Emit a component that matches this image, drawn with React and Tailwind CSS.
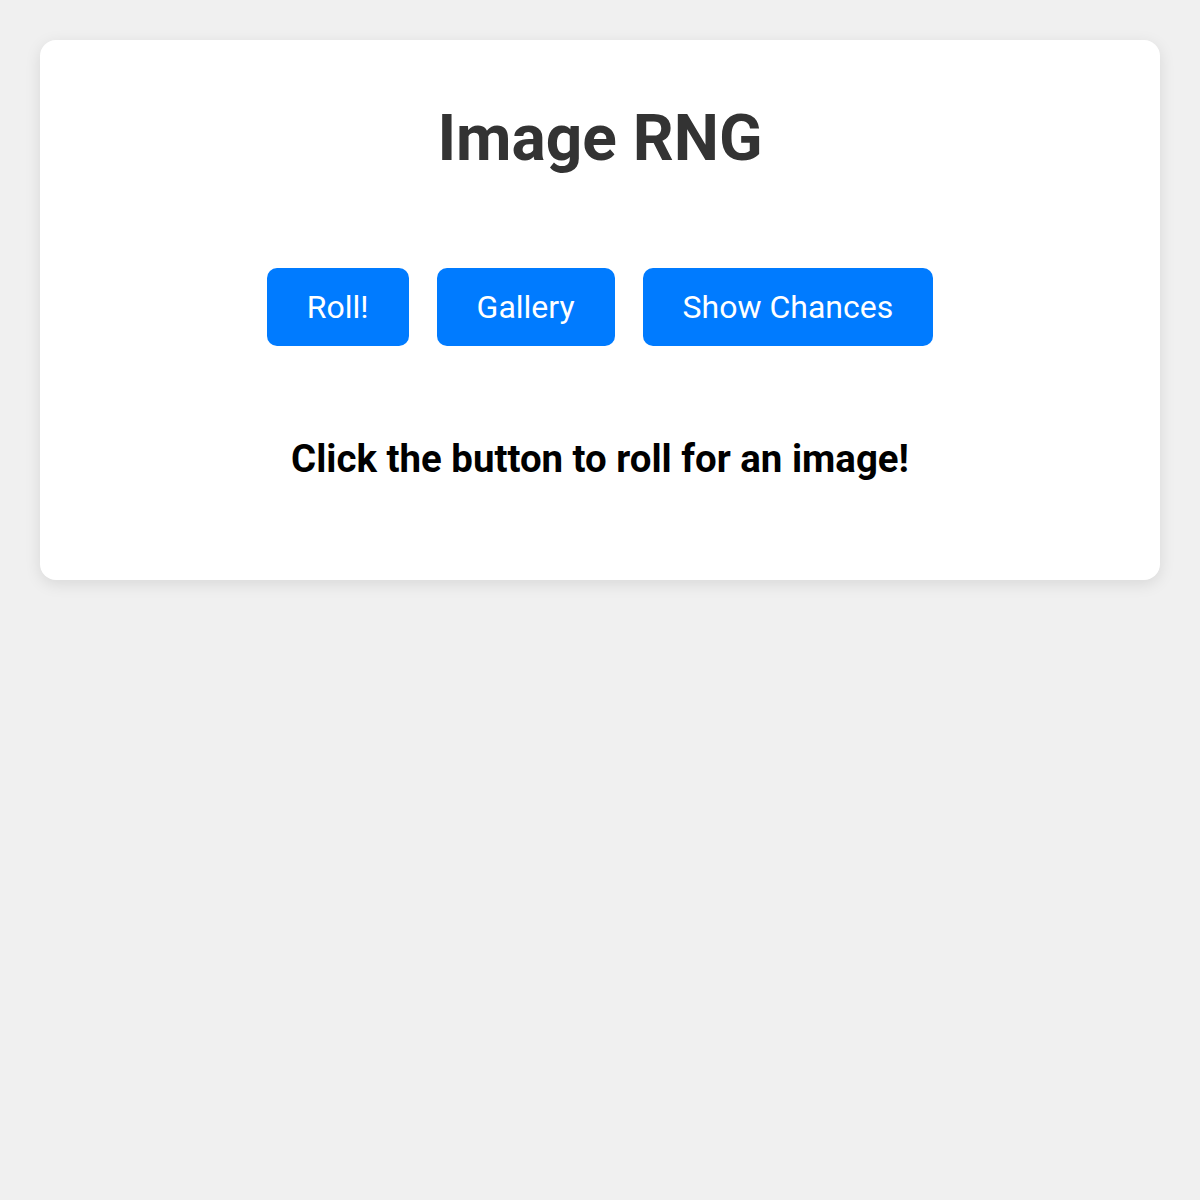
export default function App() {
  const buttons = ['Roll!', 'Gallery', 'Show Chances'];

  return (
    <div
      className="min-h-[1200px] bg-[#f0f0f0] p-[40px]"
      style={{ fontFamily: 'Roboto, "Liberation Sans", sans-serif' }}
    >
      {/* カード */}
      <div className="flex flex-col items-center rounded-[16px] bg-white pt-[61px] pb-[99px] shadow-[0_4px_16px_rgba(0,0,0,0.1)]">
        <h1 className="text-[64px] font-bold leading-[75px] text-[#333]">Image RNG</h1>

        {/* ボタン */}
        <div className="mt-[92px] flex gap-[28px]">
          {buttons.map((label) => (
            <button
              key={label}
              className="rounded-[10px] bg-[#007bff] px-[40px] py-[20px] text-[32px] leading-[38px] text-white"
            >
              {label}
            </button>
          ))}
        </div>

        <p className="mt-[91px] text-[38.4px] font-bold leading-[44px] text-black">
          Click the button to roll for an image!
        </p>
      </div>
    </div>
  );
}
